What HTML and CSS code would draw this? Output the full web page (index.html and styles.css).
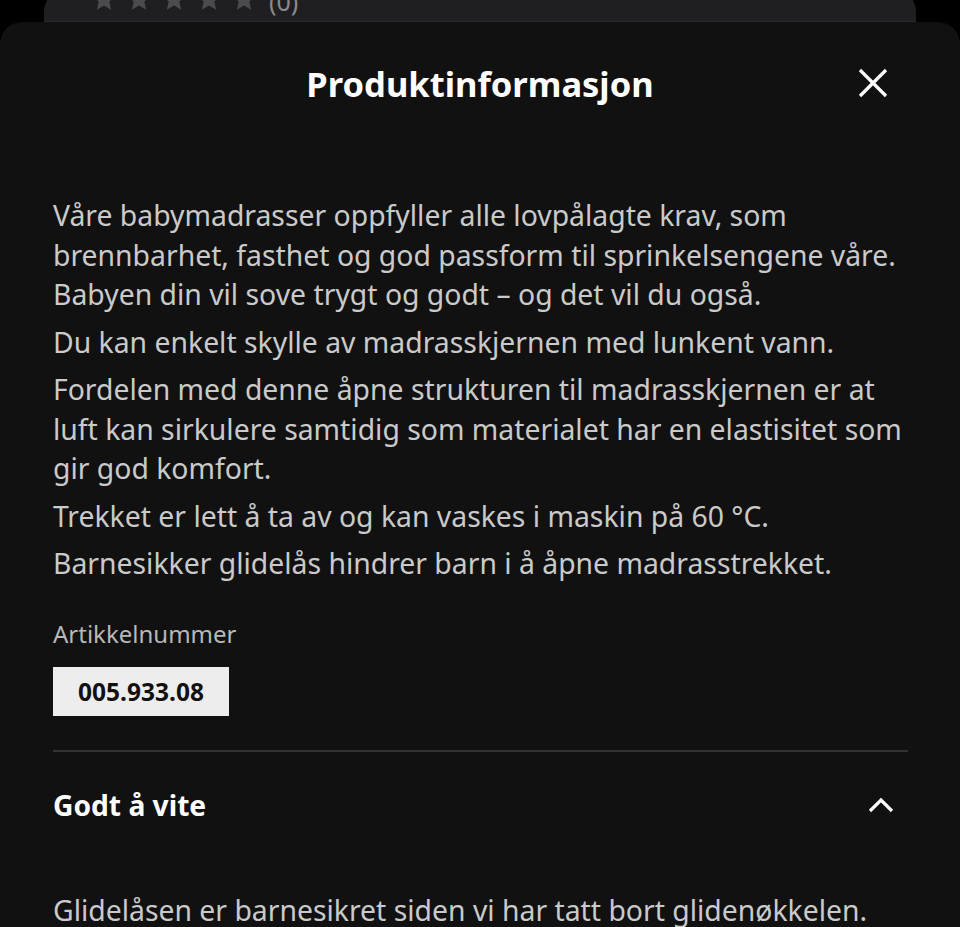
FILE: index.html
```html
<!DOCTYPE html>
<html lang="no">
<head>
<meta charset="utf-8">
<title>Produktinformasjon</title>
<link rel="stylesheet" href="styles.css">
</head>
<body>
<div class="back-card">
  <div class="stars">
    <svg class="star" viewBox="0 0 24 24"><path d="M12 1.5l3.1 7.1 7.6.7-5.8 5.1 1.7 7.6L12 18.1 5.4 22l1.7-7.6L1.3 9.3l7.6-.7z" fill="#4b4b4e"/></svg>
    <svg class="star" viewBox="0 0 24 24"><path d="M12 1.5l3.1 7.1 7.6.7-5.8 5.1 1.7 7.6L12 18.1 5.4 22l1.7-7.6L1.3 9.3l7.6-.7z" fill="#4b4b4e"/></svg>
    <svg class="star" viewBox="0 0 24 24"><path d="M12 1.5l3.1 7.1 7.6.7-5.8 5.1 1.7 7.6L12 18.1 5.4 22l1.7-7.6L1.3 9.3l7.6-.7z" fill="#4b4b4e"/></svg>
    <svg class="star" viewBox="0 0 24 24"><path d="M12 1.5l3.1 7.1 7.6.7-5.8 5.1 1.7 7.6L12 18.1 5.4 22l1.7-7.6L1.3 9.3l7.6-.7z" fill="#4b4b4e"/></svg>
    <svg class="star" viewBox="0 0 24 24"><path d="M12 1.5l3.1 7.1 7.6.7-5.8 5.1 1.7 7.6L12 18.1 5.4 22l1.7-7.6L1.3 9.3l7.6-.7z" fill="#4b4b4e"/></svg>
    <span class="count">(0)</span>
  </div>
</div>
<div class="sheet">
  <header class="sheet-header">
    <h1 class="sheet-title">Produktinformasjon</h1>
    <button class="close" aria-label="Lukk">
      <svg width="32" height="32" viewBox="0 0 32 32"><path d="M3 3 L29 29 M29 3 L3 29" stroke="#fff" stroke-width="3.2" fill="none"/></svg>
    </button>
  </header>
  <div class="content">
    <p class="txt">Våre babymadrasser oppfyller alle lovpålagte krav, som brennbarhet, fasthet og god passform til sprinkelsengene våre. Babyen din vil sove trygt og godt – og det vil du også.</p>
    <p class="txt">Du kan enkelt skylle av madrasskjernen med lunkent vann.</p>
    <p class="txt">Fordelen med denne åpne strukturen til madrasskjernen er at luft kan sirkulere samtidig som materialet har en elastisitet som gir god komfort.</p>
    <p class="txt">Trekket er lett å ta av og kan vaskes i maskin på 60 °C.</p>
    <p class="txt">Barnesikker glidelås hindrer barn i å åpne madrasstrekket.</p>
    <div class="article-label">Artikkelnummer</div>
    <div class="article-num">005.933.08</div>
    <div class="divider"></div>
    <div class="acc-head">
      <span class="acc-title">Godt å vite</span>
      <svg class="chev" width="26" height="16" viewBox="0 0 26 16"><path d="M2 14 L13 3 L24 14" stroke="#fff" stroke-width="3.2" fill="none"/></svg>
    </div>
    <p class="txt acc-body">Glidelåsen er barnesikret siden vi har tatt bort glidenøkkelen.</p>
  </div>
</div>
</body>
</html>
```

FILE: styles.css
```css
* { box-sizing: border-box; }
html, body { margin: 0; padding: 0; }
body {
  background: #000;
  font-family: "Noto Sans", "Open Sans", sans-serif;
  overflow: hidden;
  height: 927px;
}
.back-card {
  margin: -10px 44px 0;
  height: 32px;
  background: #1f1f22;
  border-radius: 22px 22px 0 0;
  border-bottom: 1px solid #2a2a2e;
  padding-left: 47px;
}
.stars {
  display: flex;
  align-items: flex-end;
  height: 21px;
  gap: 9px;
}
.star {
  width: 26px;
  height: 26px;
  flex: none;
  margin-bottom: -1px;
}
.count {
  color: #8a8a8d;
  font-size: 25px;
  line-height: 25px;
  margin-left: 3px;
  margin-bottom: -3px;
}
.sheet {
  background: #111111;
  border-radius: 22px 22px 0 0;
  height: 905px;
}
.sheet-header {
  position: relative;
  height: 124px;
  display: flex;
  align-items: center;
  justify-content: center;
}
.sheet-title {
  margin: 0;
  color: #fff;
  font-size: 34.5px;
  font-weight: 700;
  line-height: 1;
}
.close {
  position: absolute;
  right: 71px;
  top: 45px;
  width: 32px;
  height: 32px;
  padding: 0;
  border: 0;
  background: none;
  display: flex;
}
.content {
  padding: 50px 52px 0 53px;
}
.txt {
  margin: 0 0 8px;
  color: #cacaca;
  font-size: 28.35px;
  line-height: 39.5px;
}
.article-label {
  margin-top: 33px;
  color: #b8b8b8;
  font-size: 24px;
  line-height: 34px;
}
.article-num {
  margin-top: 16px;
  display: inline-block;
  width: 176px;
  height: 49px;
  background: #ededed;
  color: #111;
  font-weight: 700;
  font-size: 24.5px;
  line-height: 49px;
  text-align: center;
}
.divider {
  margin-top: 34px;
  height: 2px;
  background: #333;
}
.acc-head {
  height: 106px;
  display: flex;
  align-items: center;
  justify-content: space-between;
  padding-right: 14px;
}
.acc-title {
  color: #fff;
  font-weight: 700;
  font-size: 28.2px;
}
.acc-body {
  margin-top: 33px;
}
```
